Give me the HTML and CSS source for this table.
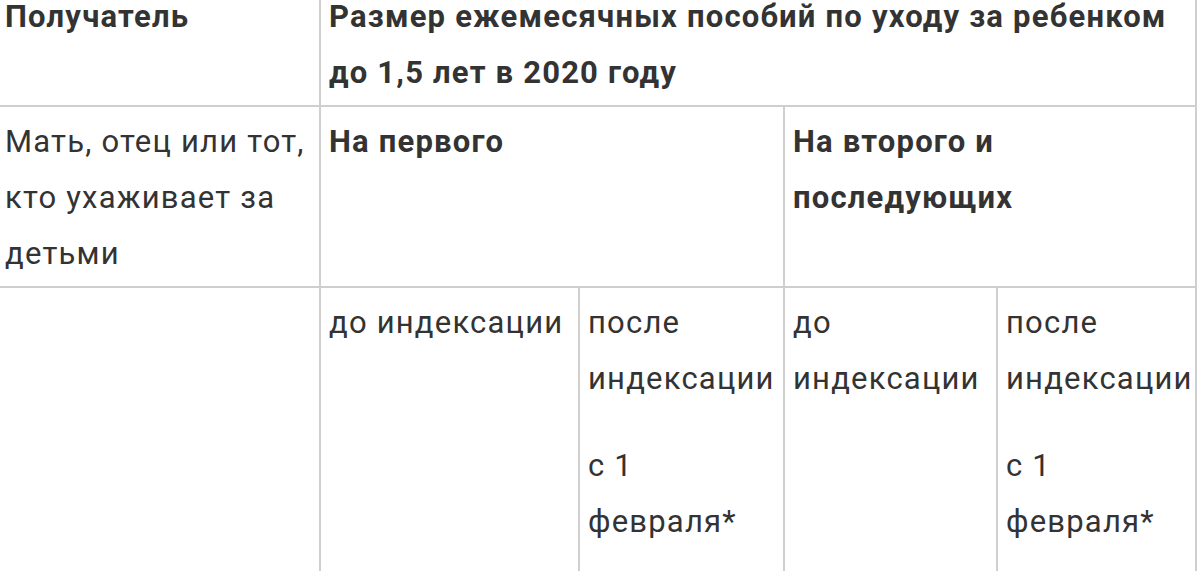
FILE: index.html
```html
<!DOCTYPE html>
<html lang="ru">
<head>
<meta charset="utf-8">
<title>Пособия по уходу за ребенком</title>
<link rel="stylesheet" href="styles.css">
</head>
<body>
<table class="benefits">
  <colgroup>
    <col class="c1"><col class="c2"><col class="c3"><col class="c4"><col class="c5">
  </colgroup>
  <tr>
    <th>Получатель</th>
    <th colspan="4">Размер ежемесячных пособий по уходу за ребенком до 1,5 лет в 2020 году</th>
  </tr>
  <tr>
    <td>Мать, отец или тот, кто ухаживает за детьми</td>
    <td colspan="2" class="bold">На первого</td>
    <td colspan="2" class="bold">На второго и последующих</td>
  </tr>
  <tr class="last">
    <td></td>
    <td>до индексации</td>
    <td><p>после индексации</p><p>с 1 февраля*</p></td>
    <td>до индексации</td>
    <td><p>после индексации</p><p>с 1 февраля*</p></td>
  </tr>
</table>
</body>
</html>
```
FILE: styles.css
```css
html, body {
  margin: 0;
  padding: 0;
  background: #ffffff;
}
body {
  overflow: hidden;
  font-family: Roboto, "Liberation Sans", sans-serif;
  color: #333333;
}
.benefits {
  border-collapse: collapse;
  table-layout: fixed;
  width: 1200px;
  margin: -20px 0 0 -5px;
  font-size: 31px;
  letter-spacing: 1.2px;
  line-height: 56px;
}
.c1 { width: 324px; }
.c2 { width: 259px; }
.c3 { width: 205px; }
.c4 { width: 213px; }
.c5 { width: 199px; }
.benefits th,
.benefits td {
  border: 2px solid #cfcfcf;
  padding: 7px 8px 4px 8px;
  text-align: left;
  vertical-align: top;
  font-weight: 400;
}
.benefits th,
.benefits .bold {
  font-weight: 700;
}
.benefits .last td {
  padding-bottom: 40px;
}
.benefits p {
  margin: 0;
}
.benefits p + p {
  margin-top: 31px;
}
```
